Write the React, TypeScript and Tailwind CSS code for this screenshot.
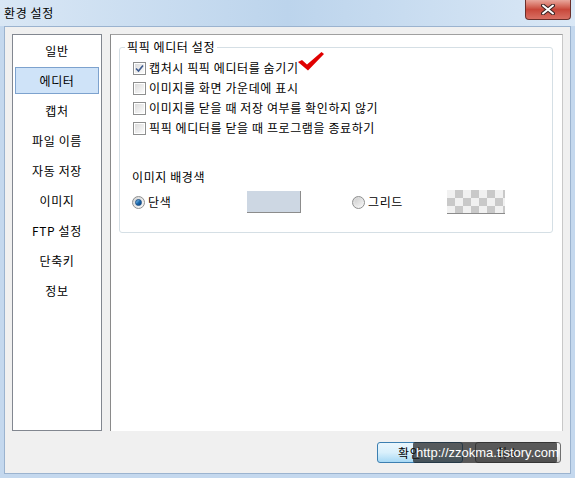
import { FC, ReactNode } from 'react';

const navItems = ['일반', '에디터', '캡처', '파일 이름', '자동 저장', '이미지', 'FTP 설정', '단축키', '정보'];

const options = [
  { label: '캡처시 픽픽 에디터를 숨기기', checked: true },
  { label: '이미지를 화면 가운데에 표시', checked: false },
  { label: '이미지를 닫을 때 저장 여부를 확인하지 않기', checked: false },
  { label: '픽픽 에디터를 닫을 때 프로그램을 종료하기', checked: false }
];

const CheckBox: FC<{ checked: boolean }> = ({ checked }) => (
  <div className="w-[13px] h-[13px] border border-[#8e8f8f] bg-white p-[1px] shrink-0">
    <div className="w-full h-full bg-gradient-to-br from-[#dcdcdc] to-[#fbfbfb] flex items-center justify-center">
      {checked && (
        <svg width="9" height="9" viewBox="0 0 9 9">
          <path d="M1 4.5 L3.5 7 L8 1.5" fill="none" stroke="#3d5a8e" strokeWidth="1.6" />
        </svg>
      )}
    </div>
  </div>
);

const Radio: FC<{ checked: boolean }> = ({ checked }) => (
  <div className="w-[13px] h-[13px] rounded-full border border-[#8e8f8f] bg-gradient-to-br from-[#d4d4d4] to-[#fafafa] flex items-center justify-center shrink-0">
    {checked ? (
      <div className="w-[7px] h-[7px] rounded-full bg-gradient-to-br from-[#8fd0f5] via-[#1c6db3] to-[#0b3f7a] border border-[#1a4f86]" />
    ) : (
      <div className="w-[8px] h-[8px] rounded-full bg-gradient-to-br from-[#cfcfcf] to-[#f3f3f3]" />
    )}
  </div>
);

const Button: FC<{ children: ReactNode; focused?: boolean }> = ({ children, focused }) => (
  <div
    className={
      focused
        ? 'w-[86px] h-[21px] rounded-[3px] border border-[#3c7fb1] bg-gradient-to-b from-[#eaf6fd] via-[#d9f0fc] to-[#a7d9f5] flex items-center pl-[20px] text-[12px]'
        : 'w-[86px] h-[21px] rounded-[3px] border border-[#707070] bg-gradient-to-b from-[#f2f2f2] via-[#ebebeb] to-[#cfcfcf] flex items-center pl-[20px] text-[12px]'
    }
  >
    {children}
  </div>
);

export default function App() {
  return (
    <div className="relative w-[575px] h-[478px] flex flex-col bg-[#c4d8ee] font-['Noto_Sans_CJK_KR','Noto_Sans',sans-serif] tracking-[0.6px] text-[#000] overflow-hidden">
      {/* title bar */}
      <div className="h-[26px] flex items-start justify-between bg-gradient-to-r from-[#d9e7f5] via-[#bcd4ec] to-[#dae8f6] shrink-0">
        <div className="pl-[4px] pt-[5px] text-[12px] leading-[16px]">환경 설정</div>
        <div className="mr-[4px] w-[46px] h-[20px] rounded-b-[4px] border border-t-0 border-[#6b2f2a] bg-gradient-to-b from-[#e8a69c] via-[#c8473a] to-[#d86f63] flex items-center justify-center">
          <svg width="14" height="11" viewBox="0 0 14 11">
            <path d="M2 1.5 L12 9.5 M12 1.5 L2 9.5" stroke="#3a2323" strokeWidth="4" strokeLinecap="round" />
            <path d="M2 1.5 L12 9.5 M12 1.5 L2 9.5" stroke="#ffffff" strokeWidth="2" strokeLinecap="round" />
          </svg>
        </div>
      </div>

      {/* client */}
      <div className="flex-1 mx-[4px] mb-[4px] bg-[#f0f0f0] border border-[#9bb3cf] flex flex-col">
        <div className="flex gap-[8px] pt-[7px] pl-[7px] h-[405px]">
          {/* nav list */}
          <div className="w-[90px] h-[397px] border border-[#828790] bg-white pt-[2px] px-[2px] flex flex-col gap-[3px]">
            {navItems.map((item, i) => (
              <div
                key={item}
                className={
                  i === 1
                    ? 'h-[27px] flex items-center justify-center text-[12px] bg-[#cfe3f8] border border-[#7da2ce]'
                    : 'h-[27px] flex items-center justify-center text-[12px]'
                }
              >
                {item}
              </div>
            ))}
          </div>

          {/* content panel */}
          <div className="w-[453px] h-[397px] bg-white border-l border-t border-r border-l-[#8a8a8a] border-t-[#a0a0a0] border-r-[#c8c8c8] pl-[8px] pt-[12px]">
            <div className="relative w-[434px] h-[186px] border border-[#d5dfe5] rounded-[3px] pl-[12px] pt-[10px]">
              <span className="absolute -top-[9px] left-[5px] bg-white px-[2px] text-[12px] leading-[16px]">
                픽픽 에디터 설정
              </span>
              <div className="flex flex-col">
                {options.map((o, i) => (
                  <div key={o.label} className="h-[20px] flex items-center gap-[2px] pl-[1px]">
                    <CheckBox checked={o.checked} />
                    <span className="text-[12px] leading-[16px] ml-[1px]">{o.label}</span>
                    {i === 0 && (
                      <svg width="26" height="19" viewBox="0 0 26 19" className="relative -top-[7px] -ml-[3px]">
                        <path d="M0 10 L4 8 L9 12.5 L23.5 0 L26 2 L10 18.5 Z" fill="#e00000" />
                      </svg>
                    )}
                  </div>
                ))}
              </div>

              <div className="mt-[29px] h-[20px] flex items-center text-[12px] leading-[16px]">이미지 배경색</div>

              <div className="mt-[3px] h-[24px] flex items-center">
                <div className="w-[115px] flex items-center gap-[3px]">
                  <Radio checked />
                  <span className="text-[12px] leading-[16px]">단색</span>
                </div>
                <div className="w-[54px] h-[22px] bg-[#cdd7e3] border-r border-b border-[#8c8c8c]" />
                <div className="w-[51px]" />
                <div className="w-[95px] flex items-center gap-[3px]">
                  <Radio checked={false} />
                  <span className="text-[12px] leading-[16px]">그리드</span>
                </div>
                <div className="w-[58px] h-[24px] border-b border-[#8c8c8c] bg-[repeating-conic-gradient(#c9c9c9_0_25%,#f1f1f1_0_50%)] bg-[length:16px_16px]" />
              </div>
            </div>
          </div>
        </div>

        {/* buttons */}
        <div className="flex justify-end gap-[12px] pr-[9px] mt-[10px]">
          <Button focused>확인</Button>
          <Button>취소</Button>
        </div>
      </div>

      {/* watermark */}
      <div className="absolute left-[413px] top-[442px] w-[144px] h-[21px] rounded-[2px] bg-[rgba(30,30,30,0.72)] flex items-center pl-[3px] text-white text-[13px] tracking-normal font-['Liberation_Sans',sans-serif] leading-[16px]">
        http://zzokma.tistory.com
      </div>
    </div>
  );
}
